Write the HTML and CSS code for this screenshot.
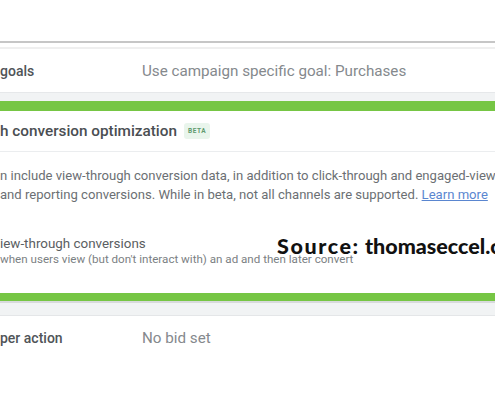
FILE: index.html
```html
<!DOCTYPE html>
<html>
<head>
<meta charset="utf-8">
<link rel="stylesheet" href="styles.css">
</head>
<body>
<div class="page">
  <div class="top"></div>
  <div class="rule"></div>
  <div class="rule-light"></div>
  <div class="row row-goals">
    <div class="label">goals</div>
    <div class="value">Use campaign specific goal: Purchases</div>
  </div>
  <div class="band"></div>
  <div class="green"></div>
  <div class="panel">
    <div class="panel-head">
      <span class="panel-title">h conversion optimization</span>
      <span class="beta">BETA</span>
    </div>
    <div class="panel-body">
      <p class="desc">n include view-through conversion data, in addition to click-through and engaged-view<br>and reporting conversions. While in beta, not all channels are supported. <a class="link" href="#">Learn more</a></p>
      <div class="option">
        <div class="opt-title">iew-through conversions</div>
        <div class="opt-sub">when users view (but don't interact with) an ad and then later convert</div>
      </div>
    </div>
  </div>
  <div class="green green-bottom"></div>
  <div class="band band-bottom"></div>
  <div class="row row-bid">
    <div class="label">per action</div>
    <div class="value">No bid set</div>
  </div>
  <div class="source"><span class="source-key">Source:</span> thomaseccel.com</div>
</div>
</body>
</html>
```
FILE: styles.css
```css
html, body {
  margin: 0;
  padding: 0;
  background: #ffffff;
}
body {
  width: 495px;
  height: 400px;
  overflow: hidden;
}
.page {
  position: relative;
  width: 495px;
  height: 400px;
  overflow: hidden;
  font-family: Roboto, "Liberation Sans", sans-serif;
}
.top {
  height: 41px;
}
.rule {
  height: 2px;
  background: #c6c6c6;
  margin-bottom: 4px;
}
.rule-light {
  height: 2px;
  background: #efefef;
}
.row {
  display: flex;
  align-items: center;
  white-space: nowrap;
}
.row-goals {
  height: 43px;
}
.label {
  width: 142px;
  font-size: 14px;
  font-weight: 500;
  color: #505458;
}
.value {
  font-size: 15.2px;
  color: #85898d;
}
.band {
  height: 8px;
  background: #f1f3f4;
  border-top: 1px solid #e6e8ea;
}
.green {
  height: 10px;
  background: #76c644;
}
.panel-head {
  height: 40px;
  display: flex;
  align-items: center;
  gap: 7px;
  border-bottom: 1px solid #ebedef;
  white-space: nowrap;
}
.panel-title {
  font-size: 15.3px;
  font-weight: 500;
  color: #4a4e52;
}
.beta {
  font-size: 6.5px;
  font-weight: 700;
  letter-spacing: 0.6px;
  color: #5f9a6e;
  background: #e9f5ec;
  padding: 4px 4px;
  border-radius: 3px;
}
.panel-body {
  padding-top: 14px;
}
.desc {
  margin: 0;
  font-size: 13.1px;
  line-height: 19px;
  color: #6b6f73;
  white-space: nowrap;
}
.link {
  color: #5a86d0;
  text-decoration: underline;
}
.option {
  margin-top: 31px;
  height: 58px;
}
.opt-title {
  font-size: 13.4px;
  line-height: 17px;
  color: #5a5e62;
  white-space: nowrap;
}
.opt-sub {
  font-size: 11.6px;
  line-height: 15px;
  color: #7b7f83;
  white-space: nowrap;
}
.green-bottom {
  height: 8px;
}
.band-bottom {
  height: 12px;
  border-top: 2px solid #d8dadc;
  border-bottom: 1px solid #e4e6e8;
}
.row-bid {
  height: 44px;
}
.source {
  position: absolute;
  left: 277px;
  top: 233px;
  font-family: Lato, "Liberation Sans", sans-serif;
  font-weight: 900;
  font-size: 21.5px;
  color: #111111;
  white-space: nowrap;
}
.source-key {
  letter-spacing: 1.6px;
}
```
